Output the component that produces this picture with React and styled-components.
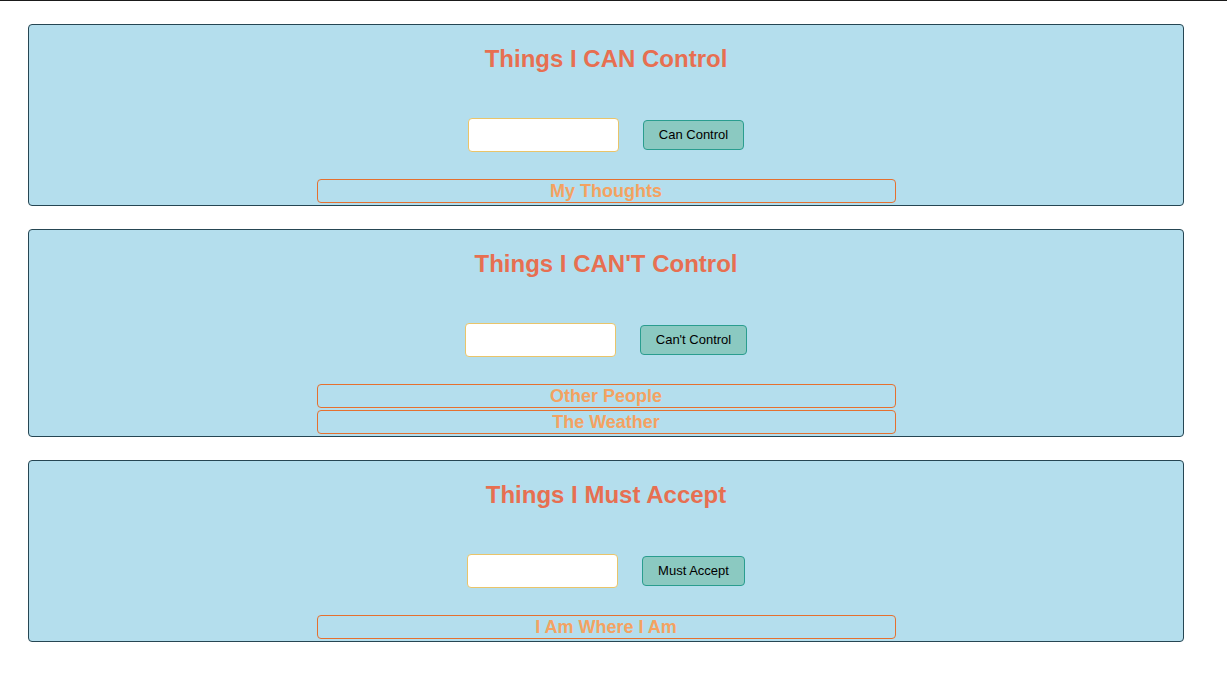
import React, { useState } from 'react';
import styled, { createGlobalStyle } from 'styled-components';

const GlobalStyle = createGlobalStyle`
    html, body {
        margin: 0;
        padding: 0;
        background: #fff;
        font-family: "Liberation Sans", Arial, sans-serif;
    }
`;

const Page = styled.div`
    border-top: 1px solid #1a1a1a;
    padding: 23px 43px 20px 28px;
    display: flex;
    flex-direction: column;
    gap: 23px;
`;

const Panel = styled.section`
    background-color: #b4deed;
    border: 1px solid #264653;
    border-radius: 4px;
    display: flex;
    flex-direction: column;
    align-items: center;
    padding-bottom: 2px;
`;

const Title = styled.h2`
    color: #e76f51;
    font-size: 24px;
    font-weight: bold;
    margin: 20px 0 0;
    line-height: 28px;
`;

const Form = styled.form`
    display: flex;
    align-items: center;
    gap: 24px;
    margin-top: 45px;
`;

const Input = styled.input`
    width: 151px;
    height: 34px;
    box-sizing: border-box;
    border: 1px solid #e9c46a;
    border-radius: 4px;
    background: #fff;
    outline: none;
`;

const Button = styled.button`
    height: 30px;
    padding: 0 15px 1px;
    box-sizing: border-box;
    background-color: #8bc9c1;
    border: 1px solid #2a9d8f;
    border-radius: 4px;
    font-family: "Liberation Sans", Arial, sans-serif;
    font-size: 13px;
    color: #000;
`;

const List = styled.ul`
    list-style: none;
    margin: 27px 0 0;
    padding: 0;
    width: calc(50% + 2px);
    display: flex;
    flex-direction: column;
    gap: 2px;
`;

const Item = styled.li`
    height: 24px;
    box-sizing: border-box;
    border: 1px solid #e5702f;
    border-radius: 4px;
    color: #f4a261;
    font-size: 18px;
    font-weight: bold;
    text-align: center;
    line-height: 22px;
`;

const sections = [
    { title: 'Things I CAN Control', button: 'Can Control', items: ['My Thoughts'] },
    { title: "Things I CAN'T Control", button: "Can't Control", items: ['Other People', 'The Weather'] },
    { title: 'Things I Must Accept', button: 'Must Accept', items: ['I Am Where I Am'] },
];

function Section({ title, button, items }) {
    const [list, setList] = useState(items);
    const [text, setText] = useState('');

    const add = (e) => {
        e.preventDefault();
        if (!text.trim()) return;
        setList([...list, text]);
        setText('');
    };

    return (
        <Panel>
            <Title>{title}</Title>
            <Form onSubmit={add}>
                <Input value={text} onChange={(e) => setText(e.target.value)} />
                <Button type="submit">{button}</Button>
            </Form>
            <List>
                {list.map((item, i) => (
                    <Item key={i}>{item}</Item>
                ))}
            </List>
        </Panel>
    );
}

export default function App() {
    return (
        <>
            <GlobalStyle />
            <Page>
                {sections.map((s) => (
                    <Section key={s.title} {...s} />
                ))}
            </Page>
        </>
    );
}
